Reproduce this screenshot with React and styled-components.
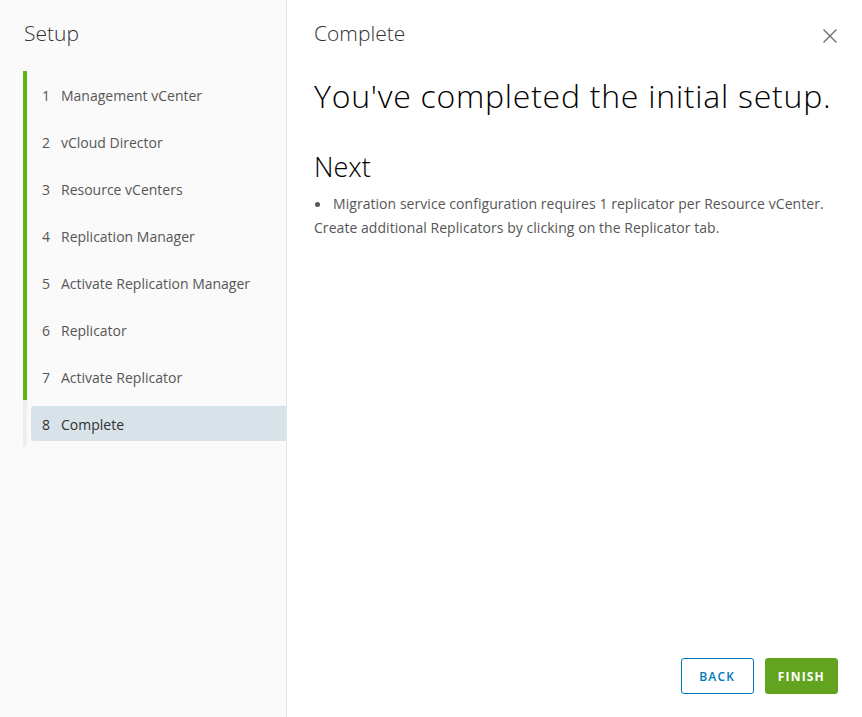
import React from 'react';
import styled, { createGlobalStyle } from 'styled-components';

const GlobalStyle = createGlobalStyle`
  * {
    box-sizing: border-box;
  }
  html, body {
    margin: 0;
    padding: 0;
    height: 100%;
  }
  body {
    font-family: 'Open Sans', 'Liberation Sans', sans-serif;
    background: #fff;
  }
`;

const Wizard = styled.div`
  display: flex;
  height: 100vh;
  min-height: 717px;
`;

const Sidebar = styled.aside`
  width: 287px;
  flex-shrink: 0;
  background: #fafafa;
  border-right: 1px solid #e4e4e4;
  padding: 18px 0 0 23px;
`;

const SideTitle = styled.h2`
  margin: 0 0 23px 1px;
  font-size: 21px;
  font-weight: 300;
  line-height: 30px;
  color: #313131;
`;

const StepList = styled.ol`
  list-style: none;
  margin: 0;
  padding: 0;
`;

const Step = styled.li`
  display: flex;
  height: 47px;
  padding: 6px 0 6px 4px;
  border-left: 4px solid ${(p) => (p.done ? '#60b515' : '#eeeeee')};
`;

const StepLabel = styled.div`
  display: flex;
  align-items: center;
  flex: 1;
  padding: 1px 0 0 11px;
  border-radius: 3px 0 0 3px;
  background: ${(p) => (p.active ? '#d8e3e9' : 'transparent')};
  font-size: 14px;
  color: ${(p) => (p.active ? '#313131' : '#565656')};
`;

const StepNum = styled.span`
  width: 8px;
  margin-right: 11px;
  text-align: center;
`;

const Main = styled.main`
  flex: 1;
  display: flex;
  flex-direction: column;
  padding: 18px 24px 23px 27px;
`;

const Header = styled.div`
  display: flex;
  align-items: center;
  justify-content: space-between;
`;

const Title = styled.h3`
  margin: 0;
  font-size: 21px;
  font-weight: 300;
  line-height: 30px;
  color: #313131;
`;

const CloseButton = styled.button`
  display: flex;
  padding: 0;
  border: none;
  background: none;
  cursor: pointer;
  margin-top: 6px;
`;

const Content = styled.div`
  flex: 1;
`;

const Heading = styled.h1`
  margin: 28px 0 0;
  font-size: 32px;
  font-weight: 300;
  line-height: 40px;
  color: #000;
  letter-spacing: 0.75px;
`;

const SubHeading = styled.h2`
  margin: 33px 0 0;
  font-size: 27px;
  font-weight: 300;
  line-height: 36px;
  color: #000;
`;

const Body = styled.div`
  margin-top: 7px;
  font-size: 14px;
  line-height: 24px;
  color: #565656;
  letter-spacing: 0.05px;
`;

const Bullet = styled.span`
  display: inline-block;
  width: 5px;
  height: 5px;
  margin: 0 13px 0 1px;
  border-radius: 50%;
  background: #565656;
  vertical-align: 2px;
`;

const Footer = styled.div`
  display: flex;
  justify-content: flex-end;
  gap: 11px;
`;

const Button = styled.button`
  height: 36px;
  min-width: 73px;
  padding: 0 12px;
  border-radius: 3px;
  border: 1px solid ${(p) => (p.primary ? '#62a420' : '#0079b8')};
  background: ${(p) => (p.primary ? '#62a420' : '#fff')};
  color: ${(p) => (p.primary ? '#fff' : '#0079b8')};
  font-family: inherit;
  font-size: 12px;
  font-weight: ${(p) => (p.primary ? 700 : 600)};
  letter-spacing: 1.2px;
  text-transform: uppercase;
  cursor: pointer;
`;

const steps = [
  'Management vCenter',
  'vCloud Director',
  'Resource vCenters',
  'Replication Manager',
  'Activate Replication Manager',
  'Replicator',
  'Activate Replicator',
  'Complete',
];

const App = () => (
  <>
    <GlobalStyle />
    <Wizard>
      <Sidebar>
        <SideTitle>Setup</SideTitle>
        <StepList>
          {steps.map((s, i) => (
            <Step key={s} done={i < 7}>
              <StepLabel active={i === 7}>
                <StepNum>{i + 1}</StepNum>
                {s}
              </StepLabel>
            </Step>
          ))}
        </StepList>
      </Sidebar>
      <Main>
        <Header>
          <Title>Complete</Title>
          <CloseButton aria-label="Close">
            <svg width="16" height="16" viewBox="0 0 16 16">
              <path d="M1.5 1.5 L14.5 14.5 M14.5 1.5 L1.5 14.5" stroke="#6a6a6a" strokeWidth="1.3" fill="none" />
            </svg>
          </CloseButton>
        </Header>
        <Content>
          <Heading>You've completed the initial setup.</Heading>
          <SubHeading>Next</SubHeading>
          <Body>
            <Bullet />
            Migration service configuration requires 1 replicator per Resource vCenter.
            <br />
            Create additional Replicators by clicking on the Replicator tab.
          </Body>
        </Content>
        <Footer>
          <Button>Back</Button>
          <Button primary>Finish</Button>
        </Footer>
      </Main>
    </Wizard>
  </>
);

export default App;
